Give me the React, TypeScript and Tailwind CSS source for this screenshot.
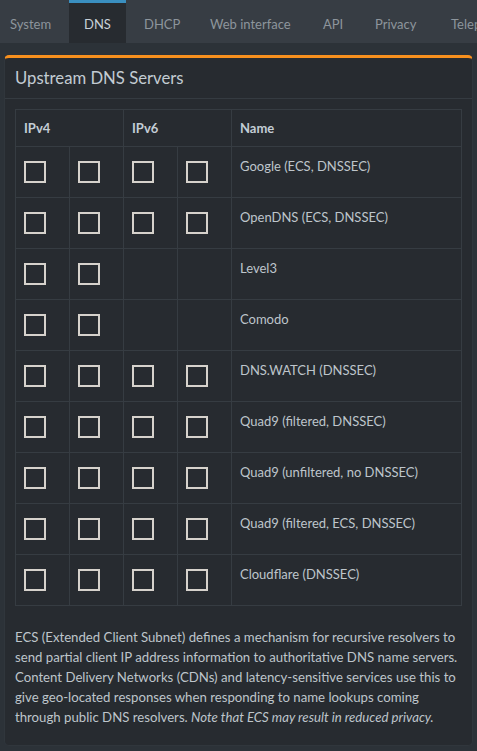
import React from "react";

const tabs = [
  { label: "System", w: "w-[69px]", pl: "pl-[10px]" },
  { label: "DNS", w: "w-[57px]", pl: "pl-[15px]", active: true },
  { label: "DHCP", w: "w-[66px]", pl: "pl-[18px]" },
  { label: "Web interface", w: "w-[113px]", pl: "pl-[18px]" },
  { label: "API", w: "w-[52px]", pl: "pl-[18px]" },
  { label: "Privacy", w: "w-[76px]", pl: "pl-[18px]" },
  { label: "Teleporter", w: "w-[100px]", pl: "pl-[18px]" },
];

const rows: { name: string; v6: boolean }[] = [
  { name: "Google (ECS, DNSSEC)", v6: true },
  { name: "OpenDNS (ECS, DNSSEC)", v6: true },
  { name: "Level3", v6: false },
  { name: "Comodo", v6: false },
  { name: "DNS.WATCH (DNSSEC)", v6: true },
  { name: "Quad9 (filtered, DNSSEC)", v6: true },
  { name: "Quad9 (unfiltered, no DNSSEC)", v6: true },
  { name: "Quad9 (filtered, ECS, DNSSEC)", v6: true },
  { name: "Cloudflare (DNSSEC)", v6: true },
];

function Box() {
  return <div className="w-[22px] h-[22px] border-2 border-[#d6d2cc]" />;
}

function CbCell({ show }: { show: boolean }) {
  return (
    <td className="w-[54px] border border-[#363c42] pl-[8px] pr-0 py-0 align-middle">
      {show ? <Box /> : null}
    </td>
  );
}

export default function App() {
  return (
    <div
      className="w-[477px] h-[751px] bg-[#2c3238] text-[#bec5cb] overflow-hidden"
      style={{ fontFamily: "Lato, 'Noto Sans', sans-serif" }}
    >
      <div className="h-[43px] bg-[#373d44] flex overflow-hidden">
        {tabs.map((t) => (
          <div
            key={t.label}
            className={`${t.w} ${t.pl} shrink-0 h-[43px] flex items-center text-[13px] whitespace-nowrap ${
              t.active
                ? "bg-[#272b30] border-t-[3px] border-[#3a8fc0] text-[#c9d1d8] pt-[4px]"
                : "text-[#8d959c] pt-[7px]"
            }`}
          >
            {t.label}
          </div>
        ))}
      </div>
      <div className="mt-[12px] mx-[4px] bg-[#272b30] rounded-[5px] border border-[#30363c] border-t-[3px] border-t-[#f7901e] h-[691px]">
        <div className="h-[41px] px-[10px] flex items-center border-b border-[#353b41]">
          <h3 className="text-[16.7px] text-[#c3ccd3] leading-none">Upstream DNS Servers</h3>
        </div>
        <div className="px-[10px] pt-[10px]">
          <table className="w-[447px] border-collapse border border-[#363c42] text-[13px] leading-[20px]">
            <thead>
              <tr className="h-[37px]">
                <th colSpan={2} className="border border-[#363c42] text-left font-bold px-[8px] py-[8px] text-[#c3cdd5]">
                  IPv4
                </th>
                <th colSpan={2} className="border border-[#363c42] text-left font-bold px-[8px] py-[8px] text-[#c3cdd5]">
                  IPv6
                </th>
                <th className="border border-[#363c42] text-left font-bold px-[8px] py-[8px] text-[#c3cdd5]">
                  Name
                </th>
              </tr>
            </thead>
            <tbody>
              {rows.map((r) => (
                <tr key={r.name} className="h-[51px]">
                  <CbCell show />
                  <CbCell show />
                  <CbCell show={r.v6} />
                  <CbCell show={r.v6} />
                  <td className="border border-[#363c42] align-top px-[8px] pt-[9px] whitespace-nowrap">
                    {r.name}
                  </td>
                </tr>
              ))}
            </tbody>
          </table>
          <p className="mt-[21px] text-[13.2px] leading-[20px] whitespace-nowrap">
            ECS (Extended Client Subnet) defines a mechanism for recursive resolvers to
            <br />
            send partial client IP address information to authoritative DNS name servers.
            <br />
            Content Delivery Networks (CDNs) and latency-sensitive services use this to
            <br />
            give geo-located responses when responding to name lookups coming
            <br />
            through public DNS resolvers. <em>Note that ECS may result in reduced privacy.</em>
          </p>
        </div>
      </div>
    </div>
  );
}
